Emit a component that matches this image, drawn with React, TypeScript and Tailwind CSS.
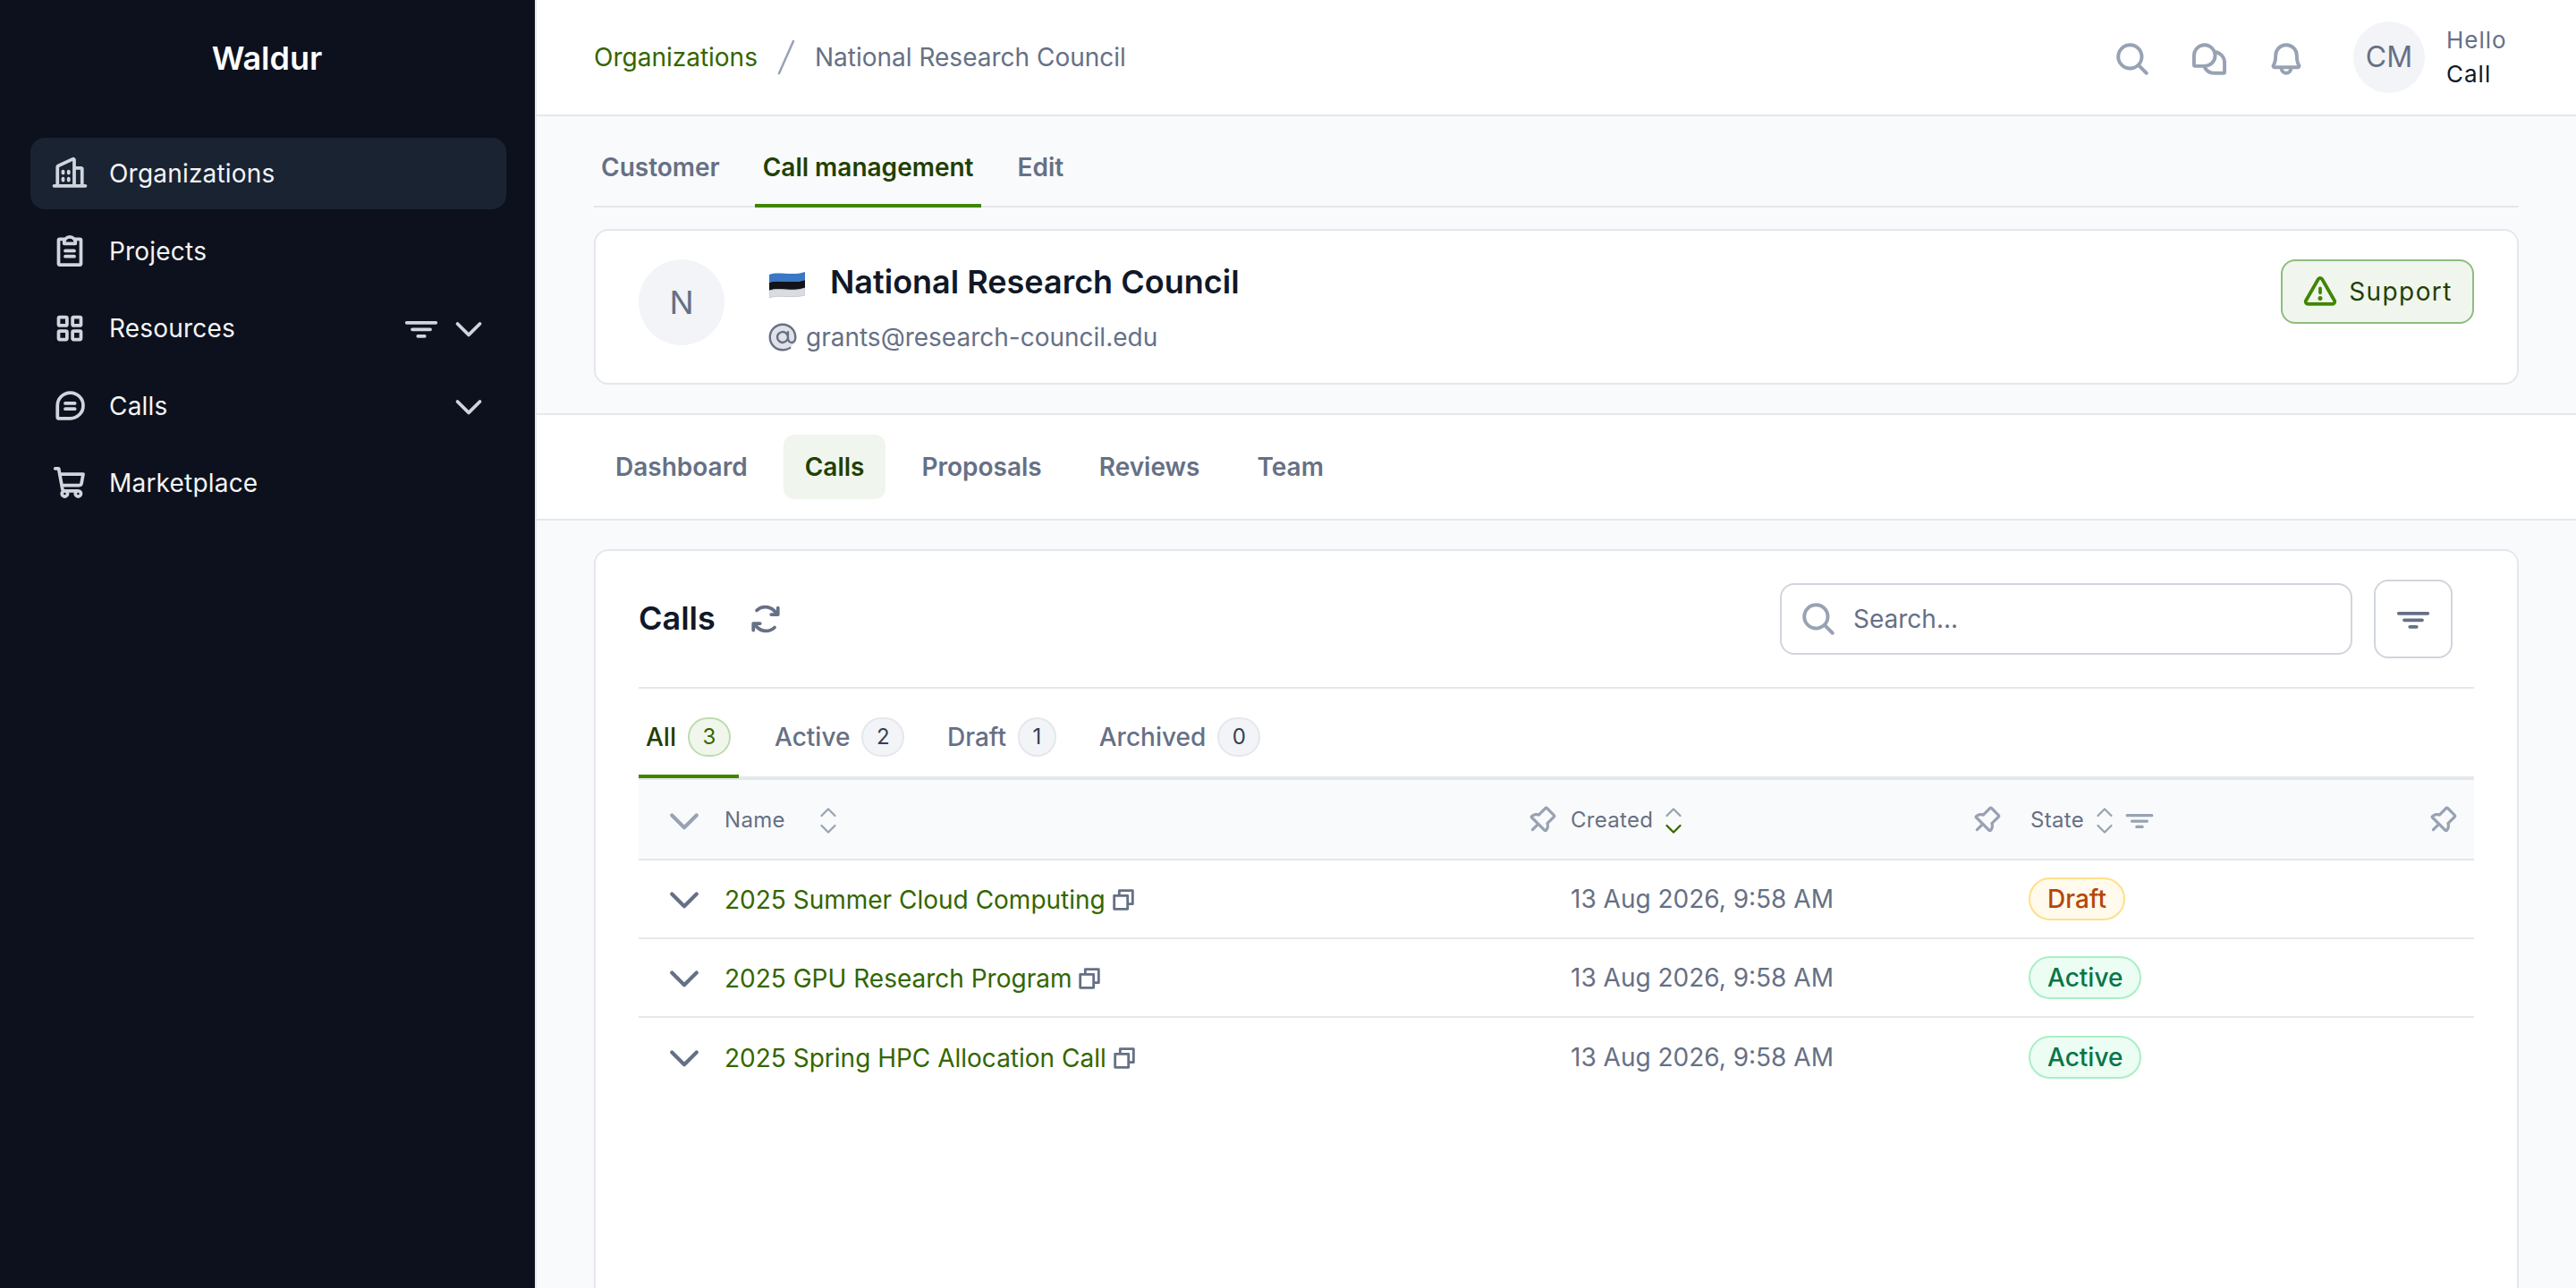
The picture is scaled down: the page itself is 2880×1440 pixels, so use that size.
import React from "react";
import {
  PiBuildingsBold, PiClipboardTextBold, PiSquaresFourBold, PiChatTeardropTextBold, PiShoppingCartBold,
  PiCaretDownBold, PiCaretUpBold, PiFunnelSimpleBold, PiMagnifyingGlassBold, PiChatsTeardropBold, PiBellBold,
  PiWarningBold, PiArrowsClockwiseBold, PiPushPinBold, PiCopyBold, PiAtDuotone,
} from "react-icons/pi";

function NavItem({ icon, label, active, caret, filter }: { icon: React.ReactNode; label: string; active?: boolean; caret?: boolean; filter?: boolean }) {
  return (
    <div className={`mb-[6.5px] flex h-[80px] items-center rounded-[16px] pl-[24px] pr-[22px] text-[28px] tracking-[0.2px] text-[#f3f4f6] ${active ? "bg-[#1a2332]" : ""}`}>
      <span className="flex w-[40px] justify-center text-[40px] text-[#d0d5dd]">{icon}</span>
      <span className="ml-[24px] flex-1">{label}</span>
      {filter && <PiFunnelSimpleBold className="mr-[13px] text-[40px] text-[#d0d5dd]" />}
      {caret && <PiCaretDownBold className="text-[40px] text-[#d0d5dd]" />}
    </div>
  );
}

function Sort({ down }: { down?: boolean }) {
  return (
    <span className="flex flex-col items-center text-[24px] leading-none text-[#98a2b3]">
      <PiCaretUpBold />
      <PiCaretDownBold className={`-mt-[7px] ${down ? "text-[#336600]" : ""}`} />
    </span>
  );
}

function Pin() {
  return <PiPushPinBold className="shrink-0 text-[34px] text-[#98a2b3]" />;
}

function CountTab({ label, count, active, className }: { label: string; count: number; active?: boolean; className: string }) {
  return (
    <div className={`-mb-[2px] flex items-center border-b-[4px] pt-[12px] text-[28px] font-medium ${active ? "border-[#3f8600] text-[#1f4000]" : "border-transparent text-[#667085]"} ${className}`}>
      <span>{label}</span>
      <span className={`ml-[13px] flex h-[44px] items-center justify-center rounded-full border-[2px] px-[14.5px] text-[24px] font-normal ${active ? "border-[#bddcae] bg-[#f0f6ec] text-[#336600]" : "border-[#e4e7ec] bg-[#f2f4f7] text-[#344054]"}`}>{count}</span>
    </div>
  );
}

function Row({ name, state, last }: { name: string; state: "Draft" | "Active"; last?: boolean }) {
  return (
    <div className={`flex h-[88px] items-center ${last ? "" : "border-b-[2px] border-[#e4e7ec]"}`}>
      <span className="flex w-[96px] shrink-0 justify-center pl-[5px]"><PiCaretDownBold className="text-[44px] text-[#667085]" /></span>
      <div className="flex w-[946px] shrink-0 items-center pt-[2px] text-[28px] text-[#336600]">
        <span>{name}</span>
        <PiCopyBold className="ml-[5px] text-[30px] text-[#667085]" />
      </div>
      <div className="w-[512px] shrink-0 text-[28px] text-[#667085]">13 Aug 2026, 9:58 AM</div>
      {state === "Draft" ? (
        <span className="flex h-[48px] items-center rounded-full border-[2px] border-[#fedf89] bg-[#fffaeb] px-[19px] text-[28px] font-medium text-[#b54708]">Draft</span>
      ) : (
        <span className="flex h-[48px] items-center rounded-full border-[2px] border-[#a9efc5] bg-[#ecfdf3] px-[19px] text-[28px] font-medium text-[#067647]">Active</span>
      )}
    </div>
  );
}

export default function App() {
  return (
    <div className="flex h-[1440px] w-[2880px] overflow-hidden bg-[#f9fafb] text-[#101828] [font-family:Inter,sans-serif]">
      <aside className="flex w-[600px] shrink-0 flex-col border-r-[2px] border-[#e4e7ec] bg-[#0c111d] pl-[34px] pr-[32px]">
        <div className="flex h-[130px] items-center justify-center pr-[3px] text-[36px] font-semibold text-white">Waldur</div>
        <nav className="mt-[24px]">
          <NavItem active icon={<PiBuildingsBold className="text-[44px]" />} label="Organizations" />
          <NavItem icon={<PiClipboardTextBold />} label="Projects" />
          <NavItem icon={<PiSquaresFourBold />} label="Resources" filter caret />
          <NavItem icon={<PiChatTeardropTextBold />} label="Calls" caret />
          <NavItem icon={<PiShoppingCartBold />} label="Marketplace" />
        </nav>
      </aside>
      <main className="flex min-w-0 flex-1 flex-col">
        <header className="flex h-[130px] shrink-0 items-center border-b-[2px] border-[#e4e7ec] bg-white pl-[64px] pr-[79px]">
          <span className="text-[28px] text-[#336600]">Organizations</span>
          <svg className="mx-[22px]" width="20" height="40" viewBox="0 0 20 40"><path d="M18 2 L2 38" stroke="#98a2b3" strokeWidth="2.5" strokeLinecap="round" /></svg>
          <span className="text-[28px] text-[#667085]">National Research Council</span>
          <div className="ml-auto flex items-center text-[42px] text-[#98a2b3]">
            <PiMagnifyingGlassBold className="mt-[4px]" />
            <PiChatsTeardropBold className="ml-[44px] mt-[4px]" />
            <PiBellBold className="ml-[44px] mt-[4px]" />
            <span className="ml-[54px] flex h-[80px] w-[80px] items-center justify-center rounded-full bg-[#f2f4f7] text-[32px] text-[#667085]">CM</span>
            <div className="ml-[24px] w-[66px] text-[26px] leading-[38px] tracking-[1px]">
              <div className="text-[#667085]">Hello</div>
              <div className="text-[#101828]">Call</div>
            </div>
          </div>
        </header>
        <section className="shrink-0 px-[64px]">
          <div className="flex h-[102px] items-center gap-[31px] border-b-[2px] border-[#e4e7ec] text-[28px] font-semibold text-[#667085]">
            <span className="flex h-full items-center px-[8px] pt-[14px]">Customer</span>
            <span className="-mb-[2px] flex h-[102px] items-center border-b-[4px] border-[#3f8600] px-[9px] pt-[16px] text-[#1f4000]">Call management</span>
            <span className="flex h-full items-center px-[9px] pt-[14px]">Edit</span>
          </div>
          <div className="mt-[24px] flex h-[174px] items-start rounded-[16px] border-[2px] border-[#e4e7ec] bg-white px-[48px] py-[32px]">
            <span className="flex h-[96px] w-[96px] items-center justify-center rounded-full bg-[#f2f4f7] text-[36px] text-[#667085]">N</span>
            <div className="ml-[50px] flex-1">
              <div className="flex h-[50px] items-center">
                <svg width="40" height="30" viewBox="0 0 40 30" className="mr-[28px] mt-[6px]">
                  <path d="M0 4 C10 0 26 6 40 1 V10 C26 15 10 9 0 13 Z" fill="#3a78c6" />
                  <path d="M0 13 C10 9 26 15 40 10 V19 C26 24 10 18 0 22 Z" fill="#111318" />
                  <path d="M0 22 C10 18 26 24 40 19 V27 C26 31 10 26 0 30 Z" fill="#d9dde1" stroke="#bcc1c8" strokeWidth="0.8" />
                </svg>
                <span className="text-[36px] font-semibold text-[#101828]">National Research Council</span>
              </div>
              <div className="mt-[16px] flex items-center text-[28px] text-[#667085]">
                <PiAtDuotone className="-ml-[4px] mr-[7px] text-[38px]" />
                <span>grants@research-council.edu</span>
              </div>
            </div>
            <div className="flex h-[72px] w-[216px] items-center justify-center rounded-[16px] border-[2px] border-[#8fbc7f] bg-[#f0f5ee] text-[28px] font-normal tracking-[1.4px] text-[#1f4000]">
              <PiWarningBold className="mr-[12px] text-[40px] text-[#3f8600]" />
              Support
            </div>
          </div>
        </section>
        <nav className="mt-[32px] flex h-[120px] shrink-0 items-center border-y-[2px] border-[#e4e7ec] bg-white pl-[64px] text-[28px] font-semibold text-[#667085]">
          <span className="px-[24px]">Dashboard</span>
          <span className="ml-[16px] flex h-[72px] items-center rounded-[12px] bg-[#f0f5ee] px-[24px] text-[#1f4000]">Calls</span>
          <span className="ml-[16px] px-[24px]">Proposals</span>
          <span className="ml-[16px] px-[24px]">Reviews</span>
          <span className="ml-[16px] px-[24px]">Team</span>
        </nav>
        <section className="mx-[64px] mt-[32px] h-[900px] shrink-0 rounded-t-[16px] border-[2px] border-[#e4e7ec] bg-white px-[48px]">
          <div className="flex h-[154px] items-center border-b-[2px] border-[#e4e7ec]">
            <span className="-mt-[2px] text-[36px] font-semibold text-[#101828]">Calls</span>
            <PiArrowsClockwiseBold className="ml-[36px] text-[40px] text-[#667085]" />
            <div className="ml-auto flex h-[80px] w-[640px] items-center rounded-[16px] border-[2px] border-[#d0d5dd] pl-[20px] text-[28px] text-[#667085]">
              <PiMagnifyingGlassBold className="mr-[18px] text-[42px] text-[#98a2b3]" />
              Search...
            </div>
            <div className="ml-[24px] mr-[24px] flex h-[88px] w-[88px] items-center justify-center rounded-[16px] border-[2px] border-[#d0d5dd] text-[40px] text-[#667085]">
              <PiFunnelSimpleBold />
            </div>
          </div>
          <div className="flex h-[102px] items-stretch border-b-[4px] border-[#e4e7ec]">
            <CountTab active label="All" count={3} className="w-[112px] pl-[8px]" />
            <CountTab label="Active" count={2} className="ml-[40px]" />
            <CountTab label="Draft" count={1} className="ml-[48px]" />
            <CountTab label="Archived" count={0} className="ml-[48px]" />
          </div>
          <div className="flex h-[90px] items-center border-b-[2px] border-[#e4e7ec] bg-[#f9fafb] pt-[2px] text-[24px] font-normal tracking-[0.3px] text-[#667085]">
            <span className="flex w-[96px] shrink-0 justify-center pl-[5px]"><PiCaretDownBold className="text-[44px] text-[#98a2b3]" /></span>
            <div className="flex w-[946px] shrink-0 items-center pr-[15px]">
              <span>Name</span>
              <span className="ml-[36px]"><Sort /></span>
              <span className="ml-auto"><Pin /></span>
            </div>
            <div className="flex w-[512px] shrink-0 items-center pr-[30px]">
              <span>Created</span>
              <span className="ml-[11px]"><Sort down /></span>
              <span className="ml-auto"><Pin /></span>
            </div>
            <div className="flex flex-1 items-center pl-[2px] pr-[18px]">
              <span>State</span>
              <span className="ml-[11px]"><Sort /></span>
              <PiFunnelSimpleBold className="ml-[10px] text-[34px] text-[#98a2b3]" />
              <span className="ml-auto"><Pin /></span>
            </div>
          </div>
          <Row name="2025 Summer Cloud Computing" state="Draft" />
          <Row name="2025 GPU Research Program" state="Active" />
          <Row name="2025 Spring HPC Allocation Call" state="Active" last />
        </section>
      </main>
    </div>
  );
}
